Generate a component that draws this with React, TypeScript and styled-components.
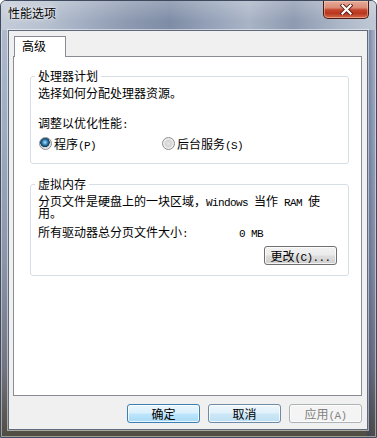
import React from 'react'
import styled, { createGlobalStyle } from 'styled-components'

const GlobalStyle = createGlobalStyle`
  html, body {
    margin: 0;
    padding: 0;
    background: #ffffff;
  }
  body {
    font-family: "Noto Sans CJK SC", "Noto Sans", sans-serif;
    font-size: 12px;
    color: #000;
  }
`

const Window = styled.div`
  width: 377px;
  height: 438px;
  box-sizing: border-box;
  display: flex;
  flex-direction: column;
  border: 1px solid #3f4a5e;
  border-radius: 6px 6px 0 0;
  box-shadow: inset 0 0 0 1px rgba(255, 255, 255, 0.45);
  background:
    linear-gradient(90deg, transparent 0, transparent 365px, rgba(40, 60, 110, 0.45) 367px, rgba(40, 60, 110, 0.15) 372px, transparent 376px),
    linear-gradient(180deg, #b4bfcf 0%, #9eabc0 30%, #8a95a8 60%, #737482 84%, #4f4d40 100%);
  overflow: hidden;
`

const TitleBar = styled.div`
  height: 29px;
  flex: none;
  display: flex;
  align-items: flex-start;
  padding: 0 7px;
  background:
    linear-gradient(180deg, rgba(255, 255, 255, 0.22) 0%, rgba(255, 255, 255, 0) 70%),
    linear-gradient(90deg, #c4ccd9 0%, #b6c0cf 12%, #a2aec2 22%, #8c99b0 34%, #7e8ca6 45%, #95a2b8 56%, #a9b4c6 66%, #8d9ab0 78%, #abb6c7 90%, #c0c9d6 100%);
`

const TitleText = styled.div`
  margin-top: 6px;
  line-height: 12px;
  text-shadow: 0 0 6px rgba(255, 255, 255, 0.9), 0 0 2px rgba(255, 255, 255, 0.8);
`

const CloseButton = styled.div`
  margin-left: auto;
  width: 46px;
  height: 18px;
  box-sizing: border-box;
  border: 1px solid #4d1a12;
  border-top: none;
  border-radius: 0 0 5px 5px;
  display: flex;
  align-items: center;
  justify-content: center;
  background: linear-gradient(180deg, #e6ab9b 0%, #db8a74 40%, #c5462f 52%, #b8361d 72%, #d26a4d 100%);
  box-shadow: inset 0 0 0 1px rgba(255, 220, 200, 0.45);
`

const ClientArea = styled.div`
  flex: 1;
  margin: 0 8px 7px 7px;
  display: flex;
  flex-direction: column;
  padding: 5px 5px 6px 4px;
  background: #f0f0f0;
  border: 1px solid #5f6a7c;
  box-shadow: 0 0 0 1px rgba(255, 255, 255, 0.5);
`

const TabStrip = styled.div`
  display: flex;
  flex: none;
`

const TabHeader = styled.div`
  position: relative;
  z-index: 1;
  margin-left: 1px;
  margin-bottom: -1px;
  width: 52px;
  height: 21px;
  box-sizing: border-box;
  padding: 2px 0 0 7px;
  line-height: 14px;
  background: #fff;
  border: 1px solid #898c95;
  border-bottom: none;
`

const TabPanel = styled.div`
  flex: 1;
  display: flex;
  flex-direction: column;
  padding: 13px 12px 0 16px;
  background: #fff;
  border: 1px solid #898c95;
`

const GroupBox = styled.fieldset`
  margin: 0;
  padding: 0 0 0 4px;
  min-width: 0;
  border: 1px solid #d5dfe5;
  border-radius: 3px;

  & + & {
    margin-top: 14px;
  }
`

const Legend = styled.legend`
  padding: 0 3px;
  line-height: 12px;
`

const GroupContent = styled.div<{ $bottom: number }>`
  padding: 5px 8px ${p => p.$bottom}px 3px;
`

const Line = styled.div<{ $top?: number }>`
  line-height: 12px;
  margin-top: ${p => p.$top || 0}px;
`

// SimSun-like narrow latin: same 6px pitch, kept off the line box height
const Latin = styled.span`
  font-family: "Liberation Mono", monospace;
  font-size: 11px;
  letter-spacing: -0.6px;
  line-height: 0;
`

const RadioRow = styled.div`
  display: flex;
  margin-top: 8px;
  padding-left: 1px;
  height: 13px;
`

const RadioOption = styled.label<{ $width?: number }>`
  display: flex;
  align-items: center;
  gap: 2px;
  width: ${p => (p.$width ? `${p.$width}px` : 'auto')};
  line-height: 12px;
`

const RadioCircle = styled.span<{ $checked?: boolean }>`
  width: 13px;
  height: 13px;
  flex: none;
  box-sizing: border-box;
  border-radius: 50%;
  border: 1px solid #8b8d8f;
  background: ${p =>
    p.$checked
      ? 'radial-gradient(circle at 45% 40%, #b7e3f8 0, #4a98cc 22%, #1a5a86 40%, #0d3552 50%, #d4d4d4 56%, #f2f2f2 80%, #fff 100%)'
      : 'radial-gradient(circle at 50% 50%, #e6e6e6 0, #d4d4d4 40%, #ececec 58%, #fafafa 100%)'};
`

const SizeRow = styled.div`
  display: grid;
  grid-template-columns: 201px auto;
  line-height: 12px;
  margin-top: 7px;
`

const SizeCell = styled.span`
  line-height: 12px;
`

const GroupButtons = styled.div`
  display: flex;
  justify-content: flex-end;
  margin-top: 8px;
  padding-right: 3px;
`

const DialogButtons = styled.div`
  display: flex;
  flex: none;
  justify-content: flex-end;
  gap: 8px;
  margin-top: 8px;
`

type Variant = 'normal' | 'default' | 'hot' | 'disabled'

const buttonLook: Record<Variant, string> = {
  normal: `
    border-color: #707070;
    background: linear-gradient(180deg, #f2f2f2 0%, #ebebeb 48%, #dddddd 52%, #cfcfcf 100%);
    color: #000;
  `,
  default: `
    border-color: #3c7fb1;
    background: linear-gradient(180deg, #eaf6fd 0%, #d9f0fc 48%, #bee6fd 52%, #a7d9f5 100%);
    color: #000;
  `,
  hot: `
    border-color: #6f8aa5;
    background: linear-gradient(180deg, #eef7fc 0%, #e0f0fa 48%, #cde8f7 52%, #bddff2 100%);
    color: #000;
  `,
  disabled: `
    border-color: #adb2b5;
    background: #f4f4f4;
    color: #838383;
  `,
}

const Button = styled.button<{ $variant: Variant }>`
  width: 73px;
  height: 19px;
  box-sizing: border-box;
  padding: 0;
  border: 1px solid;
  border-radius: 3px;
  font-family: inherit;
  font-size: 12px;
  line-height: 12px;
  box-shadow: inset 0 0 0 1px rgba(255, 255, 255, 0.75);
  ${p => buttonLook[p.$variant]}
`

const CloseGlyph = () => (
  <svg width="13" height="11" viewBox="0 0 13 11">
    <path d="M2.5 1.5 L10.5 9.5 M10.5 1.5 L2.5 9.5" stroke="#5a1c12" strokeWidth="4" strokeLinecap="square" />
    <path d="M2.5 1.5 L10.5 9.5 M10.5 1.5 L2.5 9.5" stroke="#fff" strokeWidth="2.2" strokeLinecap="square" />
  </svg>
)

const App = () => {
  return (
    <>
      <GlobalStyle />
      <Window>
        <TitleBar>
          <TitleText>{'性能选项'}</TitleText>
          <CloseButton>
            <CloseGlyph />
          </CloseButton>
        </TitleBar>
        <ClientArea>
          <TabStrip>
            <TabHeader>{'高级'}</TabHeader>
          </TabStrip>
          <TabPanel>
            <GroupBox>
              <Legend>{'处理器计划'}</Legend>
              <GroupContent $bottom={13}>
                <Line>{'选择如何分配处理器资源。'}</Line>
                <Line $top={18}>
                  {'调整以优化性能'}
                  <Latin>{':'}</Latin>
                </Line>
                <RadioRow>
                  <RadioOption $width={123}>
                    <RadioCircle $checked />
                    <span>
                      {'程序'}
                      <Latin>{'(P)'}</Latin>
                    </span>
                  </RadioOption>
                  <RadioOption>
                    <RadioCircle />
                    <span>
                      {'后台服务'}
                      <Latin>{'(S)'}</Latin>
                    </span>
                  </RadioOption>
                </RadioRow>
              </GroupContent>
            </GroupBox>
            <GroupBox>
              <Legend>{'虚拟内存'}</Legend>
              <GroupContent $bottom={10}>
                <Line>
                  {'分页文件是硬盘上的一块区域，'}
                  <Latin>{'Windows '}</Latin>
                  {'当作'}
                  <Latin>{' RAM '}</Latin>
                  {'使用。'}
                </Line>
                <SizeRow>
                  <SizeCell>
                    {'所有驱动器总分页文件大小'}
                    <Latin>{':'}</Latin>
                  </SizeCell>
                  <SizeCell>
                    <Latin>{'0 MB'}</Latin>
                  </SizeCell>
                </SizeRow>
                <GroupButtons>
                  <Button $variant="normal">
                    {'更改'}
                    <Latin>{'(C)...'}</Latin>
                  </Button>
                </GroupButtons>
              </GroupContent>
            </GroupBox>
          </TabPanel>
          <DialogButtons>
            <Button $variant="default">{'确定'}</Button>
            <Button $variant="hot">{'取消'}</Button>
            <Button $variant="disabled">
              {'应用'}
              <Latin>{'(A)'}</Latin>
            </Button>
          </DialogButtons>
        </ClientArea>
      </Window>
    </>
  )
}

export default App
